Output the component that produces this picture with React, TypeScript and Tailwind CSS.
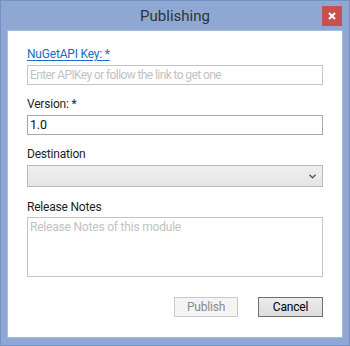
import React from "react";

export default function App() {
  const font = { fontFamily: 'Roboto, "Open Sans", sans-serif' };
  return (
    <div
      className="w-[350px] h-[346px] bg-[#8ea8d3] border border-[#7391c2] flex flex-col box-border"
      style={font}
    >
      <div className="relative h-[29px] shrink-0 flex items-center justify-center">
        <span className="text-[15px] leading-none text-[#333] mt-[2px]">Publishing</span>
        <div className="absolute right-[7px] top-[5px] w-[20px] h-[20px] bg-[#c75050] flex items-center justify-center">
          <svg width="8" height="8" viewBox="0 0 8 8">
            <path d="M1 1 L7 7 M7 1 L1 7" stroke="#fff" strokeWidth="2" />
          </svg>
        </div>
      </div>
      <div className="mx-[6px] mb-[7px] flex-1 bg-white border border-[#a9bbdc] flex flex-col pt-[15px] px-[19px] text-[12px] tracking-[-0.2px] text-[#1e1e1e]">
        <div className="h-4 leading-4 mb-[3px]">
          <span className="text-[#1a6cc9] underline underline-offset-[2px]">NuGetAPI Key: *</span>
        </div>
        <div className="h-[20px] border border-[#c4c4c4] pl-[2px] flex items-center text-[#c2c2c2] tracking-[-0.6px]">
          Enter APIKey or follow the link to get one
        </div>
        <div className="h-4 leading-4 mt-[11px] mb-[3px]">Version: *</div>
        <div className="h-[20px] border border-[#a8a8a8] pl-[2px] flex items-center text-[12.5px] text-[#111]">
          1.0
        </div>
        <div className="h-4 leading-4 mt-[11px] mb-[3px]">Destination</div>
        <div className="h-[22px] border border-[#b8b8b8] bg-gradient-to-b from-[#efefef] to-[#e5e5e5] flex items-center justify-end pr-[6px]">
          <svg width="7" height="5" viewBox="0 0 7 5">
            <path d="M0.5 0.8 L3.5 3.8 L6.5 0.8" stroke="#555" strokeWidth="1.3" fill="none" />
          </svg>
        </div>
        <div className="h-4 leading-4 mt-[12px] mb-[2px]">Release Notes</div>
        <div className="h-[60px] border border-[#c4c4c4] pl-[2px] pt-[1px] leading-4 text-[#c2c2c2]">
          Release Notes of this module
        </div>
        <div className="mt-[20px] flex justify-end gap-[20px]">
          <div className="w-[64px] h-[20px] border border-[#c9c9c9] bg-[#f4f4f4] text-[#8a8a8a] flex items-center justify-center">
            Publish
          </div>
          <div className="w-[65px] h-[20px] border border-[#707070] bg-gradient-to-b from-[#ececec] to-[#dcdcdc] text-black flex items-center justify-center">
            Cancel
          </div>
        </div>
      </div>
    </div>
  );
}
